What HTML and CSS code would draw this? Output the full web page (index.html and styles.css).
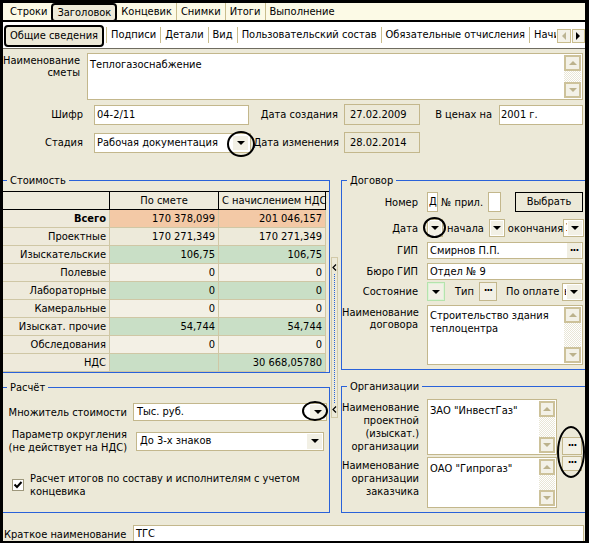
FILE: index.html
```html
<!DOCTYPE html>
<html lang="ru">
<head>
<meta charset="utf-8">
<title>Заголовок сметы</title>
<link rel="stylesheet" href="styles.css">
</head>
<body>
<div class="window">
  <div class="tabs1">
    <span class="t">Строки</span>
    <span class="t sel">Заголовок</span>
    <span class="t">Концевик</span>
    <span class="t sep">Снимки</span>
    <span class="t sep">Итоги</span>
    <span class="t sep">Выполнение</span>
  </div>
  <div class="tabs2">
    <div class="tablist">
      <span class="t2 sel">Общие сведения</span>
      <span class="t2 sep first">Подписи</span>
      <span class="t2 sep">Детали</span>
      <span class="t2 sep">Вид</span>
      <span class="t2 sep">Пользовательский состав</span>
      <span class="t2 sep">Обязательные отчисления</span>
      <span class="t2 sep">Начисления</span>
    </div>
    <div class="tabarrows">
      <span class="tarr"><i class="tri-l"></i></span>
      <span class="tarr"><i class="tri-r"></i></span>
    </div>
  </div>

  <div class="main">
    <div class="row rowA">
      <div class="lbl wA">Наименование<br>сметы</div>
      <div class="ta taA">
        <div class="ta-text">Теплогазоснабжение</div>
        <div class="vscroll"><span class="sbtn"><i class="tri-u"></i></span><span class="track"></span><span class="sbtn"><i class="tri-dg"></i></span></div>
      </div>
    </div>

    <div class="row rowB">
      <div class="lbl w80">Шифр</div>
      <div class="inp inpShifr">04-2/11</div>
      <div class="lbl w89">Дата создания</div>
      <div class="ro">27.02.2009</div>
      <div class="lbl w72">В ценах на</div>
      <div class="inp inpYear">2001 г.</div>
    </div>

    <div class="row rowC">
      <div class="lbl w80">Стадия</div>
      <div class="dd ddStage"><span class="v">Рабочая документация</span><span class="b"><i class="tri-d"></i></span></div>
      <div class="lbl w88">Дата изменения</div>
      <div class="ro ro2">28.02.2014</div>
    </div>

    <div class="cols">
      <div class="leftcol">
        <div class="grp grpL cost">
          <span class="legend">Стоимость</span>
          <div class="grid">
            <div class="c h"></div><div class="c h">По смете</div><div class="c h">С начислением НДС</div>

            <div class="c l b">Всего</div><div class="c pe">170 378,099</div><div class="c pe">201 046,157</div>
            <div class="c l">Проектные</div><div class="c be">170 271,349</div><div class="c be">170 271,349</div>
            <div class="c l">Изыскательские</div><div class="c gr">106,75</div><div class="c gr">106,75</div>
            <div class="c l">Полевые</div><div class="c li">0</div><div class="c li">0</div>
            <div class="c l">Лабораторные</div><div class="c gr">0</div><div class="c gr">0</div>
            <div class="c l">Камеральные</div><div class="c li">0</div><div class="c li">0</div>
            <div class="c l">Изыскат. прочие</div><div class="c gr">54,744</div><div class="c gr">54,744</div>
            <div class="c l">Обследования</div><div class="c li">0</div><div class="c li">0</div>
            <div class="c l">НДС</div><div class="c gr"></div><div class="c gr">30 668,05780</div>
          </div>
        </div>

        <div class="grp grpL calc">
          <span class="legend">Расчёт</span>
          <div class="row crow1">
            <div class="lbl w124">Множитель стоимости</div>
            <div class="dd ddMul"><span class="v">Тыс. руб.</span><span class="b"><i class="tri-d"></i></span></div>
          </div>
          <div class="row crow2">
            <div class="lbl w124">Параметр округления<br>(не действует на НДС)</div>
            <div class="dd ddRound"><span class="v">До 3-х знаков</span><span class="b"><i class="tri-d"></i></span></div>
          </div>
          <div class="row crow3">
            <span class="chk"><svg width="10" height="10" viewBox="0 0 10 10"><path d="M1.5 4.5 L4 7 L8.5 2" fill="none" stroke="#000" stroke-width="2"/></svg></span>
            <span class="chktext">Расчет итогов по составу и исполнителям с учетом<br>концевика</span>
          </div>
        </div>
      </div>

      <div class="split">
        <svg width="5" height="7" viewBox="0 0 5 7"><path d="M4 0.5 L1 3.5 L4 6.5" fill="none" stroke="#000" stroke-width="1.2"/></svg>
        <span class="dots-line"></span>
        <svg width="5" height="7" viewBox="0 0 5 7"><path d="M4 0.5 L1 3.5 L4 6.5" fill="none" stroke="#000" stroke-width="1.2"/></svg>
      </div>

      <div class="rightcol">
        <div class="grp grpR dog">
          <span class="legend">Договор</span>
          <div class="row drow r1">
            <div class="lbl dl">Номер</div>
            <div class="inp inpNum">До</div>
            <span class="txt ml3">№ прил.</span>
            <div class="inp inpApp"></div>
            <div class="btn">Выбрать</div>
          </div>
          <div class="row drow r2">
            <div class="lbl dl">Дата</div>
            <div class="dd dds"><span class="b"><i class="tri-d"></i></span></div>
            <span class="txt ml4">начала</span>
            <div class="dd dds ml5"><span class="b"><i class="tri-d"></i></span></div>
            <span class="txt ml3">окончания</span>
            <div class="dd ddEnd"><span class="v">1</span><span class="b"><i class="tri-d"></i></span></div>
          </div>
          <div class="row drow r3">
            <div class="lbl dl">ГИП</div>
            <div class="inp inpWide">Смирнов П.П.<span class="idots">···</span></div>
          </div>
          <div class="row drow r4">
            <div class="lbl dl">Бюро ГИП</div>
            <div class="inp inpWide">Отдел № 9</div>
          </div>
          <div class="row drow r5">
            <div class="lbl dl">Состояние</div>
            <div class="dd ddGreen"><span class="b"><i class="tri-d"></i></span></div>
            <span class="txt ml10">Тип</span>
            <div class="dbtn ml5">···</div>
            <span class="txt ml9">По оплате</span>
            <div class="dd ddEnd"><span class="v">ь</span><span class="b"><i class="tri-d"></i></span></div>
          </div>
          <div class="row drow r6">
            <div class="lbl dl two">Наименование<br>договора</div>
            <div class="ta taDog">
              <div class="ta-text">Строительство здания<br>теплоцентра</div>
              <div class="vscroll"><span class="sbtn"><i class="tri-u"></i></span><span class="track"></span><span class="sbtn"><i class="tri-dg"></i></span></div>
            </div>
          </div>
        </div>

        <div class="grp grpR org">
          <span class="legend">Организации</span>
          <div class="row orow orow1">
            <div class="lbl ol">Наименование<br>проектной<br>(изыскат.)<br>организации</div>
            <div class="ta taOrg1">
              <div class="ta-text">ЗАО "ИнвестГаз"</div>
              <div class="vscroll vs16"><span class="sbtn"><i class="tri-u"></i></span><span class="track"></span><span class="sbtn"><i class="tri-dg"></i></span></div>
            </div>
            <div class="dbtn obtn1">···</div>
          </div>
          <div class="row orow orow2">
            <div class="lbl ol">Наименование<br>организации<br>заказчика</div>
            <div class="ta taOrg2">
              <div class="ta-text">ОАО "Гипрогаз"</div>
              <div class="vscroll vs16"><span class="sbtn"><i class="tri-u"></i></span><span class="track"></span><span class="sbtn"><i class="tri-dg"></i></span></div>
            </div>
            <div class="dbtn obtn2">···</div>
          </div>
        </div>
      </div>
    </div>

    <div class="row brow">
      <div class="blbl">Краткое наименование</div>
      <div class="inp inpShort">ТГС</div>
    </div>
  </div>

  <span class="ell e1"></span>
  <span class="ell e2"></span>
  <span class="ell e3"></span>
  <span class="ell e4"></span>
</div>
</body>
</html>
```

FILE: styles.css
```css
* { box-sizing: border-box; }
html, body { margin: 0; padding: 0; }
body {
  font-family: "DejaVu Sans Condensed", "DejaVu Sans", "Liberation Sans", sans-serif;
  font-stretch: condensed;
  font-size: 11px;
  color: #000;
  background: #000;
}
i { display: block; }

.window {
  position: relative;
  width: 589px;
  height: 543px;
  overflow: hidden;
  background: #ece9d8;
  border-style: solid;
  border-color: #000;
  border-width: 3px 4px 2px 3px;
}

/* ---- tab row 1 ---- */
.tabs1 {
  display: flex;
  height: 19px;
  padding-left: 3px;
  background: #fcfae6;
  border-bottom: 2px solid #000;
}
.t {
  padding: 0 4px;
  line-height: 17px;
  white-space: nowrap;
}
.t.sep { border-left: 1px solid #c9bd8d; }
.t.sel {
  height: 19px;
  margin-bottom: -2px;
  padding: 0 4px;
  line-height: 15px;
  border: 2px solid #000;
  border-radius: 4px;
  background: #ece9d8;
}

/* ---- tab row 2 ---- */
.tabs2 {
  display: flex;
  align-items: center;
  height: 27px;
  background: #fff;
  border-bottom: 1px solid #6f6c60;
}
.tablist {
  flex: 1;
  display: flex;
  align-items: center;
  overflow: hidden;
  padding-left: 1px;
  height: 100%;
}
.t2 {
  flex: none;
  height: 16px;
  line-height: 16px;
  padding: 0 4px;
  white-space: nowrap;
}
.t2.sep { border-left: 1px solid #c9bd8d; }
.t2.first { margin-left: 2px; }
.t2.sel {
  height: 22px;
  margin-top: 2px;
  line-height: 18px;
  padding: 0 4px;
  border: 2px solid #000;
  border-radius: 4px;
  background: #ece9d8;
}
.tabarrows {
  flex: none;
  width: 29px;
  display: flex;
  gap: 1px;
  padding-left: 1px;
  margin-top: 2px;
}
.tarr {
  width: 14px;
  height: 14px;
  border: 1px solid #c9bd8d;
  background: #f4f2e8;
  display: flex;
  align-items: center;
  justify-content: center;
}
.tri-l { border-top: 4px solid transparent; border-bottom: 4px solid transparent; border-right: 4px solid #bdb594; }
.tri-r { border-top: 4px solid transparent; border-bottom: 4px solid transparent; border-left: 4px solid #000; }

/* ---- generic ---- */
.row { display: flex; align-items: center; }
.lbl { flex: none; text-align: right; white-space: nowrap; line-height: 13px; }
.w80 { width: 80px; }
.w88 { width: 88px; }
.w89 { width: 89px; }
.w72 { width: 72px; }
.w124 { width: 124px; }
.txt { flex: none; white-space: nowrap; }
.ml3 { margin-left: 3px; }
.ml4 { margin-left: 4px; }
.ml5 { margin-left: 5px; }
.ml9 { margin-left: 9px; }
.ml10 { margin-left: 10px; }

.inp {
  flex: none;
  height: 20px;
  border: 1px solid #c3b78c;
  background: #fff;
  padding: 0 2px;
  line-height: 18px;
  white-space: nowrap;
  overflow: hidden;
}
.ro {
  flex: none;
  height: 21px;
  width: 76px;
  margin-left: 6px;
  border: 1px solid #c3b78c;
  background: #ece9d8;
  padding: 0 5px;
  line-height: 19px;
}
.ro2 { margin-left: 5px; }

.dd {
  flex: none;
  display: flex;
  border: 1px solid #c3b78c;
  background: #fff;
}
.dd .v {
  flex: 1;
  overflow: hidden;
  white-space: nowrap;
  padding-left: 2px;
}
.dd .b {
  flex: none;
  width: 15px;
  margin: 1px;
  background: #f2f0e5;
  display: flex;
  align-items: center;
  justify-content: center;
}
.tri-d { border-left: 4px solid transparent; border-right: 4px solid transparent; border-top: 4px solid #000; }
.tri-u { border-left: 4px solid transparent; border-right: 4px solid transparent; border-bottom: 4px solid #bcb28c; }
.tri-dg { border-left: 4px solid transparent; border-right: 4px solid transparent; border-top: 4px solid #bcb28c; }

.ta {
  flex: none;
  display: flex;
  border: 1px solid #c3b78c;
  background: #fff;
}
.ta-text {
  flex: 1;
  padding: 4px 2px;
  line-height: 13px;
  white-space: nowrap;
  overflow: hidden;
}
.vscroll {
  flex: none;
  width: 17px;
  margin: 1px;
  display: flex;
  flex-direction: column;
}
.vs16 { width: 16px; }
.sbtn {
  flex: none;
  height: 16px;
  border: 2px solid #cdc29a;
  background: #f3f1e7;
  display: flex;
  align-items: center;
  justify-content: center;
}
.track {
  flex: 1;
  background: repeating-conic-gradient(#e9e6d6 0 25%, #ffffff 0 50%) 0 0 / 2px 2px;
}

/* ---- header rows ---- */
.rowA { margin-top: 4px; align-items: flex-start; }
.wA { width: 77px; padding-top: 2px; line-height: 12px; }
.taA { margin-left: 7px; width: 496px; height: 47px; }
.rowB { margin-top: 4px; height: 21px; }
.inpShifr { margin-left: 11px; width: 155px; }
.inpYear { margin-left: 7px; width: 84px; padding-left: 1px; }
.rowC { margin-top: 7px; height: 21px; }
.ddStage { margin-left: 11px; width: 157px; height: 20px; }
.ddStage .v { padding-left: 2px; line-height: 18px; }
.ddStage .b { margin: 2px 2px 2px 0; }

/* ---- columns ---- */
.cols { display: flex; align-items: flex-start; margin-top: 27px; }
.leftcol { flex: none; width: 327px; display: flex; flex-direction: column; }
.rightcol { flex: none; width: 244px; display: flex; flex-direction: column; }

.grp { border: 1px solid #2a62d9; }
.grpL { border-left: none; }
.grpR { border-right: none; }
.legend {
  display: block;
  width: max-content;
  margin: -7px 0 0 4px;
  padding: 0 3px;
  line-height: 13px;
  background: #ece9d8;
}
.grpR .legend { margin-left: 5px; }

/* cost table */
.cost { height: 193px; }
.grid {
  margin-top: 4px;
  display: grid;
  grid-template-columns: 107px 109px 107px;
  border-top: 1px solid #000;
}
.c {
  height: 18px;
  line-height: 17px;
  padding: 0 3px;
  text-align: right;
  white-space: nowrap;
  border-right: 1px solid #cfc7a5;
  border-bottom: 1px solid #cfc7a5;
}
.c.h {
  text-align: center;
  background: #eeebdc;
  border-right-color: #000;
  border-bottom-color: #000;
}
.c.l { background: #eeeadb; }
.c.b { font-weight: bold; }
.c.pe { background: #f3c9a6; }
.c.be { background: #edeada; }
.c.gr { background: #c9dfc6; }
.c.li { background: #f3f0e5; }

/* calc */
.calc { margin-top: 14px; height: 126px; }
.crow1 { margin-top: 9px; height: 18px; }
.ddMul { margin-left: 6px; width: 194px; height: 18px; }
.ddMul .v, .ddRound .v { line-height: 16px; padding-left: 3px; }
.ddMul .b, .ddRound .b { margin: 1px 1px 1px 0; }
.crow2 { margin-top: 7px; height: 26px; }
.ddRound { margin-left: 9px; width: 188px; height: 19px; }
.crow3 { margin-top: 18px; align-items: flex-start; }
.chk {
  flex: none;
  width: 12px;
  height: 12px;
  margin: 7px 0 0 9px;
  border: 1px solid #9d977c;
  background: #fff;
  display: flex;
  align-items: center;
  justify-content: center;
}
.chktext { margin-left: 6px; line-height: 13px; white-space: nowrap; }

/* splitter */
.split {
  flex: none;
  width: 7px;
  height: 161px;
  margin: 77px 3px 0 1px;
  border: 1px solid #d2c9a8;
  background: #ece9d8;
  display: flex;
  flex-direction: column;
  align-items: center;
  padding: 6px 0 4px;
}
.dots-line {
  flex: 1;
  margin: 3px 0;
  border-left: 1px dotted #2a62d9;
}

/* dogovor */
.dog { height: 190px; padding-right: 2px; }
.dl { width: 76px; margin-right: 9px; }
.r1 { margin-top: 5px; height: 20px; }
.inpNum { width: 11px; padding: 0 0 0 1px; }
.inpApp { width: 13px; margin-left: 5px; }
.btn {
  flex: none;
  margin-left: auto;
  width: 68px;
  height: 20px;
  border: 1px solid #000;
  background: #ece9d8;
  text-align: center;
  line-height: 18px;
}
.r2 { margin-top: 7px; height: 18px; }
.dds { width: 16px; height: 18px; }
.dds .b { width: 12px; margin: 1px 1px 1px auto; }
.ddEnd { margin-left: auto; width: 21px; height: 18px; }
.ddEnd .v { padding-left: 1px; width: 3px; line-height: 16px; }
.ddEnd .b { width: 14px; }
.r3 { margin-top: 5px; height: 17px; }
.inpWide { flex: 1; height: 17px; line-height: 15px; display: flex; }
.idots {
  margin-left: auto;
  margin-right: -1px;
  width: 14px;
  background: #f0eee2;
  text-align: center;
  font-weight: bold;
  letter-spacing: -1px;
}
.r4 { margin-top: 4px; height: 17px; }
.r5 { margin-top: 2px; height: 19px; }
.ddGreen { width: 18px; height: 19px; border-color: #b5e3ad; background: #dff3d8; }
.ddGreen .b { width: 14px; margin: 1px 1px 1px auto; }
.dbtn {
  flex: none;
  width: 18px;
  height: 19px;
  border: 1px solid #c3b78c;
  background: #f2f0e5;
  text-align: center;
  line-height: 16px;
  font-weight: bold;
  letter-spacing: -1px;
}
.r6 { margin-top: 4px; height: 60px; align-items: flex-start; }
.two { padding-top: 2px; line-height: 12px; }
.taDog { flex: 1; height: 60px; }
.taDog .ta-text { padding-top: 3px; }

/* organizations */
.org { margin-top: 16px; height: 127px; }
.orow { align-items: flex-start; }
.orow1 { margin-top: 6px; height: 56px; }
.orow2 { margin-top: 2px; height: 51px; }
.ol { width: 77px; margin-right: 8px; padding-top: 2px; line-height: 13px; }
.taOrg1 { width: 130px; height: 56px; }
.taOrg2 { width: 130px; height: 51px; }
.obtn1 { width: 20px; height: 18px; margin-left: 5px; align-self: flex-end; }
.obtn2 { width: 20px; height: 15px; margin-left: 5px; margin-top: -1px; line-height: 12px; }

/* bottom */
.brow { margin-top: 12px; height: 18px; }
.blbl { flex: none; width: 129px; margin-left: 1px; white-space: nowrap; }
.inpShort { flex: 1; height: 18px; margin-right: 1px; line-height: 16px; padding-left: 2px; }

/* annotation ellipses */
.ell {
  position: absolute;
  border: 2px solid #000;
  border-radius: 50%;
}
.e1 { left: 224px; top: 128px; width: 28px; height: 26px; }
.e2 { left: 420px; top: 214px; width: 23px; height: 21px; }
.e3 { left: 299px; top: 398px; width: 26px; height: 20px; }
.e4 { left: 554px; top: 423px; width: 28px; height: 52px; }
```
